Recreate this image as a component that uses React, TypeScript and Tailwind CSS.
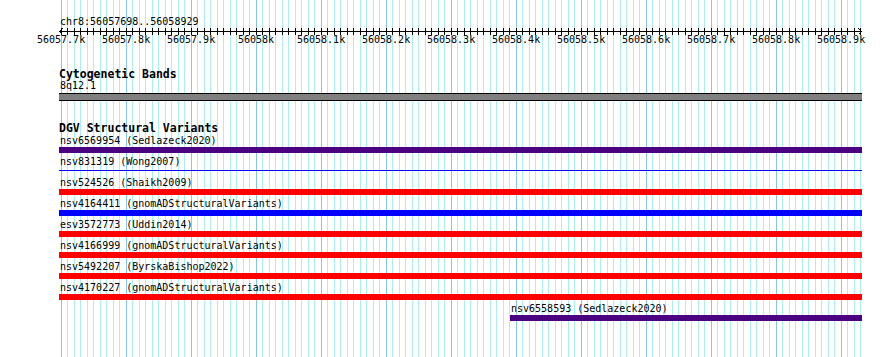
import React, { JSX } from "react";

// one grid line / tick every 10 bp, 0.65 px per bp
const gridX = (k: number) => Math.floor(2 + 6.5 * k);
const GRID_LINES = Array.from({ length: 124 }, (_, k) => k);

const rulerLabels = [
  "56057.7k",
  "56057.8k",
  "56057.9k",
  "56058k",
  "56058.1k",
  "56058.2k",
  "56058.3k",
  "56058.4k",
  "56058.5k",
  "56058.6k",
  "56058.7k",
  "56058.8k",
  "56058.9k",
];

type Feature = {
  label: string;
  color: string;
  thin?: boolean;
  offset?: string;
};

const features: Feature[] = [
  { label: "nsv6569954 (Sedlazeck2020)", color: "bg-[#4b0082]" },
  { label: "nsv831319 (Wong2007)", color: "bg-[#0000ff]", thin: true },
  { label: "nsv524526 (Shaikh2009)", color: "bg-[#ff0000]" },
  { label: "nsv4164411 (gnomADStructuralVariants)", color: "bg-[#0000ff]" },
  { label: "esv3572773 (Uddin2014)", color: "bg-[#ff0000]" },
  { label: "nsv4166999 (gnomADStructuralVariants)", color: "bg-[#ff0000]" },
  { label: "nsv5492207 (ByrskaBishop2022)", color: "bg-[#ff0000]" },
  { label: "nsv4170227 (gnomADStructuralVariants)", color: "bg-[#ff0000]" },
  { label: "nsv6558593 (Sedlazeck2020)", color: "bg-[#4b0082]", offset: "ml-[451px]" },
];

const GridLines = (): JSX.Element => (
  <svg className="absolute inset-0" width={803} height={357} shapeRendering="crispEdges">
    {GRID_LINES.map((k) => (
      <rect
        key={k}
        x={gridX(k)}
        y={0}
        width={1}
        height={357}
        fill={k % 10 === 0 ? "#88c6e8" : "#afeeee"}
      />
    ))}
  </svg>
);

const Ruler = (): JSX.Element => (
  <div className="relative h-[20px]">
    <svg className="absolute left-0 top-0" width={803} height={10} shapeRendering="crispEdges">
      <rect x={0} y={4} width={803} height={1} fill="#000" />
      {GRID_LINES.map((k) => (
        <rect key={k} x={gridX(k)} y={1} width={1} height={7} fill="#000" />
      ))}
      <path d="M0.5 4.5 L3.5 1.5 M0.5 4.5 L3.5 7.5" stroke="#000" fill="none" />
      <path d="M802.5 4.5 L799.5 1.5 M802.5 4.5 L799.5 7.5" stroke="#000" fill="none" />
    </svg>
    {rulerLabels.map((label, i) => (
      <span
        key={label}
        className="absolute top-[7px] w-[48px] text-center leading-[11px]"
        style={{ left: gridX(i * 10) - 24 }}
      >
        {label}
      </span>
    ))}
  </div>
);

export default function App(): JSX.Element {
  return (
    <div className="w-[890px] h-[357px] bg-white overflow-hidden font-['DejaVu_Sans_Mono',monospace] text-[10px] text-black">
      <div className="relative ml-[59px] w-[803px] h-full">
        <GridLines />

        <div className="relative pt-[16px]">
          <div className="leading-[11px] h-[11px] pl-[1px]">chr8:56057698..56058929</div>
          <Ruler />

          <div className="mt-[21px] font-bold text-[11.5px] leading-[12px] h-[12px]">Cytogenetic Bands</div>
          <div className="leading-[11px] h-[11px] pl-[1px]">8q12.1</div>
          <div className="mt-[2px] h-[8px] border-y border-black bg-[#808080]" />

          <div className="mt-[21px] font-bold text-[11.5px] leading-[12px] h-[12px]">DGV Structural Variants</div>
          <div className="flex flex-col pt-[1px]">
            {features.map((f) => (
              <div key={f.label} className={`flex flex-col h-[21px] ${f.offset ?? ""}`}>
                <div className="leading-[11px] h-[11px] pl-[1px] whitespace-nowrap">{f.label}</div>
                {f.thin ? (
                  <div className={`mt-[3px] h-[1px] ${f.color}`} />
                ) : (
                  <div className={`mt-[1px] h-[6px] ${f.color}`} />
                )}
              </div>
            ))}
          </div>
        </div>
      </div>
    </div>
  );
}
